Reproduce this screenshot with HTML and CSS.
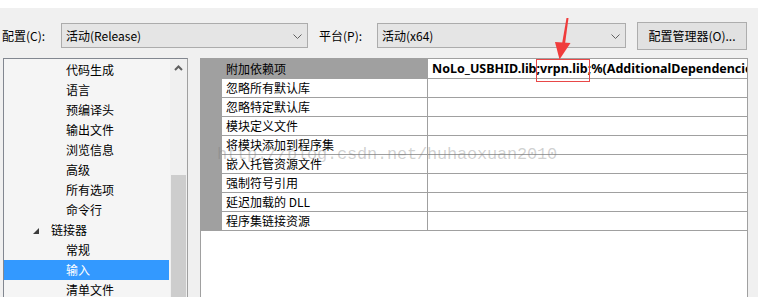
FILE: index.html
```html
<!DOCTYPE html>
<html>
<head>
<meta charset="utf-8">
<link rel="stylesheet" href="styles.css">
</head>
<body>
<div class="topstrip"></div>
<div class="toolbar">
  <span class="lbl lbl1">配置(C):</span>
  <div class="combo c1"><span class="ctext">活动(Release)</span><svg class="chev" width="9" height="5" viewBox="0 0 9 5"><polyline points="0.5,0.5 4.5,4.5 8.5,0.5" fill="none" stroke="#606060" stroke-width="1"/></svg></div>
  <span class="lbl lbl2">平台(P):</span>
  <div class="combo c2"><span class="ctext">活动(x64)</span><svg class="chev" width="9" height="5" viewBox="0 0 9 5"><polyline points="0.5,0.5 4.5,4.5 8.5,0.5" fill="none" stroke="#606060" stroke-width="1"/></svg></div>
  <div class="btn">配置管理器(O)...</div>
</div>
<div class="main">
  <div class="tree">
    <div class="items">
      <div class="item l2">代码生成</div>
      <div class="item l2">语言</div>
      <div class="item l2">预编译头</div>
      <div class="item l2">输出文件</div>
      <div class="item l2">浏览信息</div>
      <div class="item l2">高级</div>
      <div class="item l2">所有选项</div>
      <div class="item l2">命令行</div>
      <div class="item l1"><svg class="tri" width="6" height="6" viewBox="0 0 6 6"><polygon points="6,0 6,6 0,6" fill="#3c3c3c"/></svg>链接器</div>
      <div class="item l2">常规</div>
      <div class="item l2 sel">输入</div>
      <div class="item l2">清单文件</div>
    </div>
    <div class="scroll">
      <div class="up"><svg width="9" height="6" viewBox="0 0 9 6"><polyline points="1,5 4.5,1.5 8,5" fill="none" stroke="#606060" stroke-width="2"/></svg></div>
      <div class="track"><div class="thumb"></div></div>
    </div>
  </div>
  <div class="grid">
    <div class="row head"><div class="gut"></div><div class="name">附加依赖项</div><div class="val">NoLo_USBHID.lib;vrpn.lib;%(AdditionalDependencies)</div></div>
    <div class="row"><div class="gut"></div><div class="name">忽略所有默认库</div><div class="val"></div></div>
    <div class="row"><div class="gut"></div><div class="name">忽略特定默认库</div><div class="val"></div></div>
    <div class="row"><div class="gut"></div><div class="name">模块定义文件</div><div class="val"></div></div>
    <div class="row"><div class="gut"></div><div class="name">将模块添加到程序集</div><div class="val"></div></div>
    <div class="row"><div class="gut"></div><div class="name">嵌入托管资源文件</div><div class="val"></div></div>
    <div class="row"><div class="gut"></div><div class="name">强制符号引用</div><div class="val"></div></div>
    <div class="row"><div class="gut"></div><div class="name">延迟加载的 DLL</div><div class="val"></div></div>
    <div class="row"><div class="gut"></div><div class="name">程序集链接资源</div><div class="val"></div></div>
  </div>
</div>
<div class="watermark">http://blog.csdn.net/huhaoxuan2010</div>
<div class="redbox"></div>
<svg class="arrow" width="30" height="50" viewBox="550 14 30 50">
  <polygon points="566.5,18 568.5,18 565,44 562,44" fill="#f03c3c"/>
  <polygon points="555,42 570.5,43 559.5,59.5" fill="#f03c3c"/>
</svg>
</body>
</html>
```

FILE: styles.css
```css
html, body {
  margin: 0;
  padding: 0;
}
body {
  width: 758px;
  height: 297px;
  overflow: hidden;
  background: #f0f0f0;
  font-family: "Noto Sans CJK SC", "Noto Sans", sans-serif;
  font-size: 12px;
  color: #000;
  position: relative;
}
.topstrip {
  height: 8px;
  background: #fff;
}
.toolbar {
  display: flex;
  align-items: flex-start;
  margin-top: 14px;
  height: 28px;
  padding-left: 2px;
}
.lbl {
  line-height: 28px;
  height: 28px;
}
.lbl1 { width: 59px; }
.lbl2 { width: 58px; margin-left: 11px; }
.combo {
  box-sizing: border-box;
  margin-top: 1px;
  height: 25px;
  background: #e5e5e5;
  border: 1px solid #acacac;
  display: flex;
  align-items: center;
  padding-left: 4px;
  padding-right: 5px;
}
.c1 { width: 247px; }
.c2 { width: 249px; }
.ctext { flex: 1; line-height: 23px; }
.chev { display: block; margin-top: 1px; }
.btn {
  box-sizing: border-box;
  margin-left: 11px;
  width: 110px;
  height: 28px;
  background: #e1e1e1;
  border: 1px solid #adadad;
  text-align: center;
  line-height: 26px;
}
.main {
  display: flex;
  align-items: flex-start;
  margin-top: 8px;
  height: 239px;
  overflow: hidden;
}
.tree {
  box-sizing: border-box;
  margin-left: 3px;
  width: 185px;
  height: 239px;
  border: 1px solid #828790;
  border-right-color: #a0a0a0;
  border-bottom: none;
  background: #f5f5f5;
  display: flex;
  overflow: hidden;
}
.items {
  width: 166px;
  padding-top: 1px;
  overflow: hidden;
}
.item {
  height: 20px;
  line-height: 20px;
  white-space: nowrap;
  display: flex;
  align-items: center;
}
.l2 { padding-left: 62px; }
.l1 { padding-left: 29px; }
.tri { margin-right: 12px; margin-top: 2px; }
.sel {
  background: #3399ff;
  color: #fff;
  width: 165px;
  box-sizing: border-box;
}
.scroll {
  width: 17px;
  background: #f0f0f0;
  display: flex;
  flex-direction: column;
}
.up {
  height: 17px;
  flex: none;
  display: flex;
  align-items: center;
  justify-content: center;
}
.track {
  flex: 1;
  padding-top: 99px;
  display: flex;
  justify-content: center;
}
.thumb {
  width: 15px;
  flex: none;
  background: #cdcdcd;
}
.grid {
  box-sizing: border-box;
  margin-left: 12px;
  width: 548px;
  height: 239px;
  background: #fff;
  border: 1px solid #a0a0a0;
  border-bottom: none;
}
.row {
  display: flex;
  border-bottom: 1px solid #a0a0a0;
}
.row.head { height: 19px; }
.row:not(.head) { height: 18px; }
.gut {
  width: 21px;
  background: #a0a0a0;
  flex: none;
}
.name {
  box-sizing: border-box;
  width: 206px;
  flex: none;
  border-right: 1px solid #a0a0a0;
  padding-left: 4px;
  line-height: 18px;
  white-space: nowrap;
}
.head .name {
  background: #a0a0a0;
  line-height: 19px;
}
.val {
  flex: 1;
  overflow: hidden;
  white-space: nowrap;
  padding-left: 4px;
  font-family: "Noto Sans", sans-serif;
  font-weight: bold;
  font-size: 12.5px;
  line-height: 19px;
}
.watermark {
  position: absolute;
  left: 217px;
  top: 145px;
  font-family: "Liberation Mono", monospace;
  font-size: 17px;
  letter-spacing: -0.2px;
  color: rgba(120, 120, 120, 0.35);
  white-space: nowrap;
  line-height: 20px;
}
.redbox {
  position: absolute;
  left: 536px;
  top: 59px;
  width: 52px;
  height: 21px;
  border: 1px solid #e84848;
}
.arrow {
  position: absolute;
  left: 550px;
  top: 14px;
}
```
